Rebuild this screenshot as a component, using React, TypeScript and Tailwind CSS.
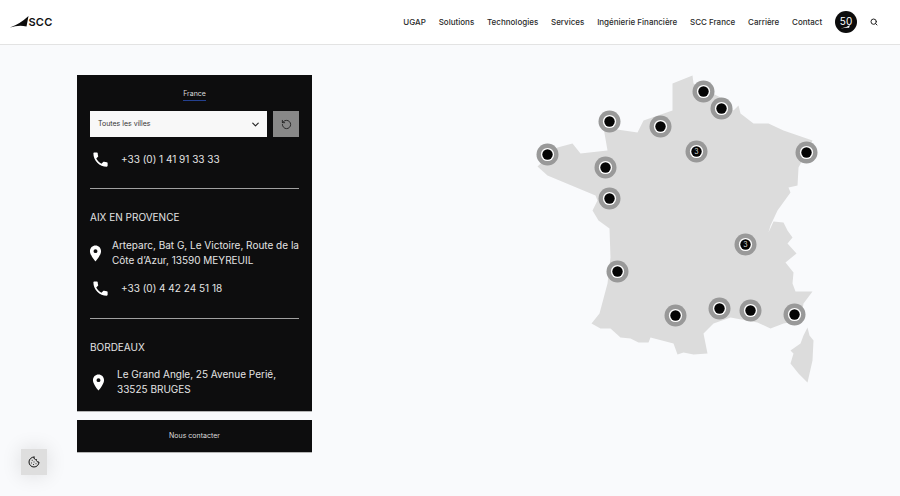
import { ChevronDown, Cookie, RotateCcw, Search } from 'lucide-react'
import { MdLocationOn, MdPhone } from 'react-icons/md'

const navItems = ['UGAP', 'Solutions', 'Technologies', 'Services', 'Ingénierie Financière', 'SCC France', 'Carrière', 'Contact']

const markers = [
  { x: 547, y: 154 },
  { x: 609, y: 121 },
  { x: 605, y: 167 },
  { x: 609, y: 198 },
  { x: 660, y: 126 },
  { x: 703, y: 91 },
  { x: 721, y: 108 },
  { x: 696, y: 151, count: 3 },
  { x: 806, y: 152 },
  { x: 745, y: 244, count: 3 },
  { x: 617, y: 271 },
  { x: 675, y: 315 },
  { x: 719, y: 308 },
  { x: 750, y: 310 },
  { x: 794, y: 314 },
]

const mainland =
  'M672 83 L692 75 L693 83 L720 97 L733 110 L738 105 L740 113 L753 123 L768 123 L783 130 L812 140 L806 152 L798 167 L797 185 L788 187 L790 192 L777 210 L770 225 L768 232 L773 221 L783 222 L787 230 L792 237 L787 243 L796 253 L785 262 L793 272 L792 283 L795 291 L812 291 L803 303 L800 320 L783 323 L770 328 L757 322 L730 317 L713 323 L703 333 L707 353 L693 354 L683 352 L677 354 L673 343 L650 337 L648 342 L638 342 L630 338 L620 337 L610 328 L600 328 L591 323 L599 313 L607 283 L610 257 L609 228 L598 220 L592 210 L597 200 L595 195 L547 175 L537 166 L557 147 L572 143 L580 153 L607 150 L603 127 L637 132 L643 120 L672 110 Z'
const corsica =
  'M807 327 L809 335 L813 340 L812 360 L807 382 L798 373 L790 363 L793 353 L790 350 L800 343 L803 335 Z'

function FranceMap() {
  return (
    <svg width="300" height="320" viewBox="529.5 74.5 300 320" className="ml-[218px] shrink-0">
      <path d={mainland} fill="#dcdcdc" />
      <path d={corsica} fill="#dcdcdc" />
      {markers.map((m) => (
        <g key={`${m.x}-${m.y}`}>
          <circle cx={m.x} cy={m.y} r="11" fill="#999999" />
          <circle cx={m.x} cy={m.y} r="6.6" fill="#fff" />
          <circle cx={m.x} cy={m.y} r="5.2" fill="#050505" />
          {m.count && (
            <text x={m.x} y={m.y + 2.5} textAnchor="middle" fontSize="7" fill="#d8d8d8">
              {m.count}
            </text>
          )}
        </g>
      ))}
    </svg>
  )
}

function Phone({ number }: { number: string }) {
  return (
    <div className="flex h-[16px] items-center">
      <MdPhone size={19} className="ml-[1px] shrink-0 text-white" />
      <span className="ml-[11px] text-[10px] text-[#e4e4e4]">{number}</span>
    </div>
  )
}

function Address({ lines, indent }: { lines: string[]; indent: string }) {
  return (
    <div className="flex items-center">
      <MdLocationOn size={19} className="-ml-[3px] shrink-0 text-white" />
      <div className={`${indent} text-[10px] leading-[15px] text-[#e4e4e4] whitespace-nowrap`}>
        {lines.map((line) => (
          <div key={line}>{line}</div>
        ))}
      </div>
    </div>
  )
}

export default function App() {
  return (
    <div className="relative h-[496px] w-[900px] overflow-hidden bg-[#f9fafc] font-['Inter',sans-serif]">
      <header className="flex h-[45px] items-center justify-between border-b border-[#e3e3e3] bg-white pl-[10px] pr-[22px]">
        <div className="flex items-center">
          <svg width="19" height="12" viewBox="0 0 19 12">
            <path d="M0 11.5 Q10 8 18.5 0 L16.5 10.5 Q9 8.5 0 11.5 Z" fill="#0c0c0c" />
          </svg>
          <span className="-ml-[0.5px] text-[11px] font-semibold leading-none tracking-[0.2px] text-[#111]">SCC</span>
        </div>
        <nav className="flex items-center">
          {navItems.map((item) => (
            <a key={item} className="mr-[12.8px] whitespace-nowrap text-[8px] font-medium text-[#2a2a2a]">
              {item}
            </a>
          ))}
          <div className="relative flex h-[22px] w-[22px] items-center justify-center rounded-full bg-[#0c0c0c] pb-[1px] text-[10px] font-normal text-white">
            50
            <svg width="11" height="4" viewBox="0 0 12 5" className="absolute left-[5px] top-[14px]">
              <path d="M0 4.5 Q6 4 11.5 0 L10.5 3.5 Q6 3 0 4.5 Z" fill="#fff" />
            </svg>
          </div>
          <Search size={8} strokeWidth={3} className="ml-[13px] text-[#222]" />
        </nav>
      </header>

      <main className="flex pl-[77px] pt-[30px]">
        <div className="w-[235px] shrink-0">
          <section className="h-[336px] overflow-hidden bg-[#0d0d0e] px-[13px] pt-[14px] shadow-[0_1px_0_#b5b5b5]">
            <div className="flex justify-center">
              <span className="border-b border-[#24408f] pb-[1px] text-[7px] leading-[10px] text-[#dddddd]">France</span>
            </div>
            <div className="mt-[10px] flex gap-[6px]">
              <div className="flex h-[26px] w-[178px] items-center justify-between bg-[#f8f8f8] pl-[8px] pr-[6px]">
                <span className="text-[7px] text-[#333]">Toutes les villes</span>
                <ChevronDown size={11} strokeWidth={2.5} className="text-[#222]" />
              </div>
              <button className="flex h-[26px] w-[26px] items-center justify-center bg-[#888888]">
                <RotateCcw size={11} className="text-[#222]" />
              </button>
            </div>
            <div className="mt-[14px]">
              <Phone number="+33 (0) 1 41 91 33 33" />
            </div>
            <div className="mt-[21px] h-px bg-[#a0a0a0]" />
            <h3 className="mt-[21px] text-[10px] leading-[14px] text-[#e4e4e4]">AIX EN PROVENCE</h3>
            <div className="-ml-[1px] mt-[14px]">
              <Address indent="ml-[7px]" lines={['Arteparc, Bat G, Le Victoire, Route de la', 'Côte d’Azur, 13590 MEYREUIL']} />
            </div>
            <div className="mt-[12px]">
              <Phone number="+33 (0) 4 42 24 51 18" />
            </div>
            <div className="mt-[22px] h-px bg-[#a0a0a0]" />
            <h3 className="mt-[21px] text-[10px] leading-[14px] text-[#e4e4e4]">BORDEAUX</h3>
            <div className="ml-[2px] mt-[13px]">
              <Address indent="ml-[9px]" lines={['Le Grand Angle, 25 Avenue Perié,', '33525 BRUGES']} />
            </div>
          </section>
          <div className="mt-[9px] flex h-[32px] items-center justify-center bg-[#0d0d0e] text-[7px] text-[#dddddd] shadow-[0_1px_0_#b5b5b5]">
            Nous contacter
          </div>
        </div>
        <FranceMap />
      </main>

      <button className="absolute left-[21px] top-[449px] flex h-[26px] w-[26px] items-center justify-center bg-[#dedede] shadow-[0_0_20px_rgba(0,0,0,0.12)]">
        <Cookie size={12} className="text-[#111]" />
      </button>
    </div>
  )
}
